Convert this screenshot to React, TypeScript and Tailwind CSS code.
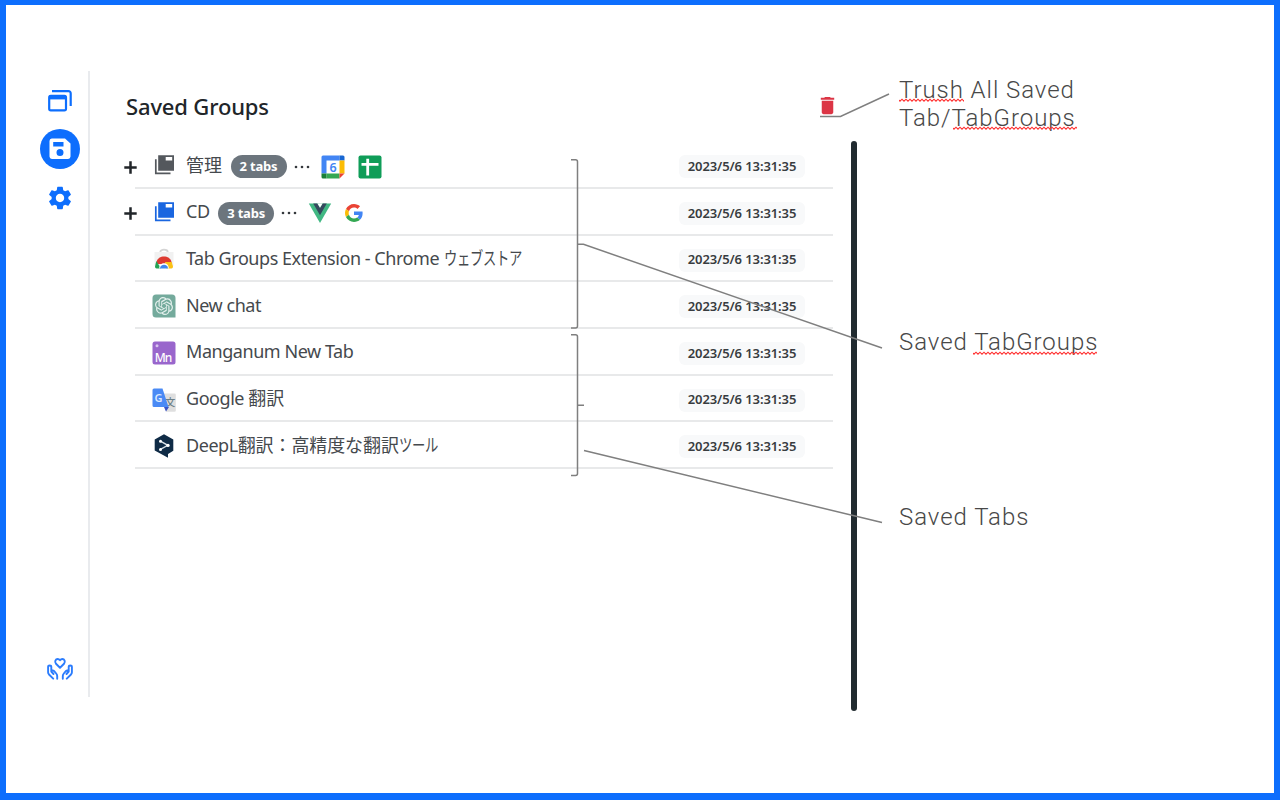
import type { ReactNode } from "react";
import { MdSettings, MdDelete } from "react-icons/md";

const DATE = "2023/5/6 13:31:35";

function WindowsIcon() {
  return (
    <svg width="24" height="22" viewBox="0 0 24 22" fill="none" stroke="#0d6efd" strokeWidth="2.2">
      <path d="M4 1.2H20.500a2.200 2.200 0 0 1 2.200 2.200V16" />
      <rect x="1.2" y="5.800" width="16.800" height="14.500" rx="1.600" />
      <path d="M1.200 7.400h16.800" strokeWidth="4" />
    </svg>
  );
}

function SaveIcon() {
  return (
    <svg width="22" height="22" viewBox="0 0 22 22">
      <path
        fill="#fff"
        fillRule="evenodd"
        d="M2.8.5H16L21.5 5.500V18.600a2.400 2.400 0 0 1-2.400 2.400H2.900a2.400 2.400 0 0 1-2.400-2.400V2.900A2.400 2.400 0 0 1 2.800.5ZM4.200 4v4.500h10.300V4ZM11 10.900a3.500 3.500 0 1 0 0 7 3.500 3.500 0 0 0 0-7Z"
      />
    </svg>
  );
}

function CareIcon() {
  return (
    <svg width="26" height="22" viewBox="0 0 26 22" fill="none" stroke="#2b7cfd" strokeWidth="1.9" strokeLinejoin="round" strokeLinecap="round">
      <path d="M13 9.700 9 5.800C7.200 3.600 8.600 1 10.700 1c1 0 1.700.5 2.300 1.200C13.600 1.500 14.300 1 15.300 1c2.100 0 3.500 2.600 1.700 4.800Z" />
      <path d="M6.200 20.700 2 16.500c-.6-.7-.9-1.300-.9-2.200V9c0-2 3.200-2 3.200 0v4.500l2.200 2.500M4.300 13.200c.7-1 2-1 2.900 0l2 2.300c.7.8 1 1.500 1 2.500v2.700" />
      <path d="M19.800 20.700 24 16.500c.6-.7.900-1.300.9-2.200V9c0-2-3.200-2-3.200 0v4.500L19.500 16M21.700 13.200c-.7-1-2-1-2.900 0l-2 2.300c-.7.8-1 1.500-1 2.500v2.700" />
    </svg>
  );
}

function GroupIcon({ color }: { color: string }) {
  return (
    <svg width="24" height="24" viewBox="0 0 24 24">
      <path d="M3.800 5.200v14.200H18.500" fill="none" stroke={color} strokeWidth="1.700" />
      <path fill={color} fillRule="evenodd" d="M6.200 1.200h15.800v15.500H6.200ZM13.700 3v3.500h6.500V3Z" />
    </svg>
  );
}

function CalendarIcon() {
  return (
    <svg width="24" height="24" viewBox="0 0 24 24">
      <path fill="#fff" d="M4 4h15v15H4z" />
      <path fill="#4285f4" d="M2 .5h16.500v5H5.500v13h-5V2A1.500 1.500 0 0 1 2 .5Z" />
      <path fill="#1967d2" d="M18.500.5H22A1.500 1.500 0 0 1 23.500 2v3.500h-5Z" />
      <path fill="#fbbc04" d="M18.500 5.500h5v13h-5z" />
      <path fill="#34a853" d="M5.500 18.500h13v5h-13z" />
      <path fill="#188038" d="M.5 18.500h5v5H2A1.500 1.500 0 0 1 .5 22Z" />
      <path fill="#ea4335" d="M18.500 18.500h5l-5 5Z" />
      <text x="12" y="16.600" textAnchor="middle" fontFamily="Noto Sans, sans-serif" fontWeight="600" fontSize="12.500" fill="#4285f4">6</text>
    </svg>
  );
}

function SheetsIcon() {
  return (
    <svg width="24" height="24" viewBox="0 0 24 24">
      <rect x=".5" y=".5" width="23" height="23" rx="2" fill="#0f9d58" />
      <path d="M3.500 9.300h17M9.700 3.800v16.700" stroke="#fff" strokeWidth="2.800" />
    </svg>
  );
}

function VueIcon() {
  return (
    <svg width="24" height="24" viewBox="0 0 24 24">
      <path fill="#41b883" d="M.8 2.500h22.400L12 22Z" />
      <path fill="#35495e" d="M5.200 2.500h4.200L12 7l2.600-4.500h4.200L12 14.300Z" />
      <path fill="#fff" d="M9.400 2.500h5.200L12 6.700Z" />
    </svg>
  );
}

function GoogleIcon() {
  return (
    <svg width="18" height="18" viewBox="0 0 48 48">
      <path fill="#EA4335" d="M24 9.500c3.540 0 6.710 1.220 9.210 3.600l6.850-6.850C35.900 2.380 30.470 0 24 0 14.620 0 6.510 5.380 2.560 13.220l7.980 6.190C12.430 13.720 17.740 9.500 24 9.500z" />
      <path fill="#4285F4" d="M46.980 24.550c0-1.570-.15-3.090-.38-4.550H24v9.020h12.940c-.58 2.960-2.260 5.480-4.780 7.180l7.730 6c4.510-4.180 7.090-10.360 7.090-17.650z" />
      <path fill="#FBBC05" d="M10.530 28.590c-.48-1.450-.76-2.990-.76-4.590s.27-3.140.76-4.590l-7.980-6.190C.92 16.460 0 20.120 0 24c0 3.880.92 7.540 2.560 10.780l7.970-6.190z" />
      <path fill="#34A853" d="M24 48c6.480 0 11.930-2.130 15.890-5.810l-7.730-6c-2.150 1.450-4.920 2.300-8.160 2.300-6.260 0-11.570-4.220-13.470-9.910l-7.980 6.190C6.510 42.620 14.620 48 24 48z" />
    </svg>
  );
}

function StoreIcon() {
  return (
    <svg width="24" height="24" viewBox="0 0 24 24">
      <path d="M8.300 5V4c0-3.200 7.400-3.200 7.400 0v1" fill="none" stroke="#d4d4d4" strokeWidth="1.800" />
      <path fill="#f1f1f1" d="M2.500 4h19v14h-19Z" />
      <path fill="#dd3a31" d="M4.500 14c1.500-7.300 13.500-7.300 15 0v2h-15Z" />
      <path fill="#22a454" d="M4.300 13 9 20.500H4.500q-1.500 0-1.500-2Z" />
      <path fill="#fbc116" d="M13 14h6.700L21 18.500q0 2-1.500 2H14Z" />
      <path fill="#fff" d="M7.200 20.500c0-7 9.600-7 9.600 0Z" />
      <path fill="#4087ed" d="M8 20.500c0-5 8-5 8 0Z" />
    </svg>
  );
}

function ChatIcon() {
  return (
    <svg width="24" height="24" viewBox="0 0 24 24">
      <path fill="#74aa9c" d="M4 .5h16A3.500 3.500 0 0 1 23.500 4v19.500H4A3.500 3.500 0 0 1 .5 20V4A3.500 3.500 0 0 1 4 .5Z" />
      <path
        transform="translate(3 3) scale(.75)"
        fill="#e4f0ed"
        d="M22.282 9.821a5.985 5.985 0 0 0-.516-4.910 6.046 6.046 0 0 0-6.510-2.900A6.065 6.065 0 0 0 4.981 4.182a5.985 5.985 0 0 0-3.998 2.900 6.046 6.046 0 0 0 .743 7.097 5.980 5.980 0 0 0 .510 4.911 6.051 6.051 0 0 0 6.515 2.900A5.985 5.985 0 0 0 13.260 24a6.056 6.056 0 0 0 5.772-4.206 5.990 5.990 0 0 0 3.998-2.900 6.056 6.056 0 0 0-.748-7.073zM13.260 22.430a4.476 4.476 0 0 1-2.876-1.040l.142-.081 4.778-2.758a.795.795 0 0 0 .393-.681v-6.737l2.020 1.169a.071.071 0 0 1 .038.052v5.583a4.504 4.504 0 0 1-4.495 4.493zM3.600 18.304a4.471 4.471 0 0 1-.535-3.014l.142.085 4.783 2.759a.771.771 0 0 0 .781 0l5.843-3.369v2.332a.080.080 0 0 1-.033.062L9.740 19.950a4.499 4.499 0 0 1-6.140-1.646zM2.341 7.896a4.485 4.485 0 0 1 2.365-1.973v5.678a.766.766 0 0 0 .388.677l5.814 3.354-2.020 1.169a.076.076 0 0 1-.071 0l-4.830-2.787A4.504 4.504 0 0 1 2.341 7.896zm16.596 3.855-5.833-3.387 2.015-1.164a.076.076 0 0 1 .071 0l4.830 2.791a4.494 4.494 0 0 1-.676 8.105v-5.678a.790.790 0 0 0-.407-.667zm2.011-3.023-.142-.085-4.774-2.782a.776.776 0 0 0-.785 0L9.409 9.230V6.897a.066.066 0 0 1 .028-.061l4.830-2.787a4.499 4.499 0 0 1 6.681 4.660zM8.306 12.863l-2.020-1.164a.080.080 0 0 1-.038-.057V6.075a4.499 4.499 0 0 1 7.376-3.454l-.142.081-4.778 2.758a.795.795 0 0 0-.393.681zm1.098-2.366 2.602-1.500 2.607 1.500v2.999l-2.598 1.500-2.607-1.500z"
      />
    </svg>
  );
}

function ManganumIcon() {
  return (
    <svg width="24" height="24" viewBox="0 0 24 24">
      <rect x=".5" y=".5" width="23" height="23" rx="2.500" fill="#9966cc" />
      <circle cx="5" cy="4.800" r="1.500" fill="#d9c5ee" />
      <text x="2.800" y="20.700" textLength="17.500" fontFamily="Noto Sans, sans-serif" fontWeight="500" fontSize="12" fill="#fff">Mn</text>
    </svg>
  );
}

function TranslateIcon() {
  return (
    <svg width="24" height="24" viewBox="0 0 24 24">
      <path fill="#dfdfdf" d="M9 5.500h13.500a1.300 1.300 0 0 1 1.300 1.300v15.700a1.300 1.300 0 0 1-1.300 1.300H14Z" />
      <text x="13.200" y="18" fontFamily="Noto Sans CJK JP, sans-serif" fontSize="10" fontWeight="500" fill="#6c7f87">文</text>
      <path fill="#3a53c5" d="m12 19 5 0-3 4.500Z" />
      <path fill="#4a8af5" d="M2 .5h8.500l6 18.500H2A1.500 1.500 0 0 1 .5 17.500V2A1.500 1.500 0 0 1 2 .5Z" />
      <text x="2.500" y="14" fontFamily="Noto Sans, sans-serif" fontWeight="600" fontSize="11" fill="#dce9ff">G</text>
    </svg>
  );
}

function DeepLIcon() {
  return (
    <svg width="24" height="24" viewBox="0 0 24 24">
      <path fill="#0f2b46" d="m12 .3 9.300 5.200v11.300L16 20v3.700L11 21l-8.300-4.500v-11Z" />
      <path d="m8 6.800 7.800 4.500L8 15.700" fill="none" stroke="#d8e1e8" strokeWidth="1.400" />
      <g fill="#fff">
        <circle cx="8.500" cy="7.200" r="1.500" />
        <circle cx="16" cy="11.400" r="1.700" />
        <circle cx="8.500" cy="15.500" r="1.500" />
      </g>
    </svg>
  );
}

function Row({
  icon,
  children,
  count,
  favicons,
}: {
  icon: ReactNode;
  children: ReactNode;
  count?: string;
  favicons?: ReactNode;
}) {
  return (
    <div className="flex h-[46.67px] items-stretch">
      <div className="flex w-[11px] shrink-0 items-center pt-[3px]">
        {count && (
          <svg className="shrink-0" width="13" height="13" viewBox="0 0 13 13">
            <path d="M.3 6.500h12.400M6.500.3v12.400" stroke="#212529" strokeWidth="2.500" />
          </svg>
        )}
      </div>
      <div className="flex w-[698px] shrink-0 items-center border-b-2 border-[#e8e9ea] pl-[17px]">
        <div className="mt-[3px] w-[24px] shrink-0">{icon}</div>
        <div className="mt-[1px] ml-[10px] text-[18px] tracking-[-0.45px] whitespace-nowrap text-[#45494d]">{children}</div>
        {count && (
          <>
            <div className="mt-[4px] ml-[8.5px] flex h-[23px] w-[56px] shrink-0 items-center justify-center rounded-full bg-[#6c757d] text-[13px] font-bold tracking-[-0.2px] whitespace-nowrap text-white">
              {count}
            </div>
            <svg className="mt-[4px] ml-[7px] shrink-0" width="16" height="4" viewBox="0 0 16 4" fill="#34383c">
              <circle cx="2" cy="2" r="1.300" />
              <circle cx="8" cy="2" r="1.300" />
              <circle cx="14" cy="2" r="1.300" />
            </svg>
            <div className="mt-[4px] ml-[11px] flex items-center gap-[13px]">{favicons}</div>
          </>
        )}
        <div className="mt-[4px] mr-[28px] ml-auto flex h-[23px] w-[126px] shrink-0 items-center justify-center rounded-[6px] bg-[#f8f9fa] text-[13px] font-semibold tracking-[-0.1px] whitespace-nowrap text-[#383c40]">
          {DATE}
        </div>
      </div>
    </div>
  );
}

export default function App() {
  return (
    <div className="relative flex h-[800px] w-[1280px] overflow-hidden border-t-[5px] border-r-[6px] border-b-[7px] border-l-[6px] border-[#0d6efd] bg-white font-['Noto_Sans','Noto_Sans_CJK_JP',sans-serif]">
      <nav className="mt-[66px] flex h-[626px] w-[84px] shrink-0 flex-col items-center border-r-2 border-[#e9ebee] pl-[25px]">
        <div className="flex w-full flex-col items-center pt-[19px]">
          <WindowsIcon />
          <div className="mt-[17px] flex h-[40px] w-[40px] items-center justify-center rounded-full bg-[#0d6efd]">
            <SaveIcon />
          </div>
          <MdSettings className="mt-[15px] text-[28px] text-[#0d6efd]" />
        </div>
        <div className="mt-auto mb-[17px]">
          <CareIcon />
        </div>
      </nav>

      <main className="w-[750px] shrink-0 pt-[83px] pl-[34px]">
        <header className="flex h-[37px] items-center justify-between pr-[1px]">
          <h1 className="ml-[2px] text-[22px] font-medium tracking-[-0.15px] whitespace-nowrap text-[#212529]">
            Saved Groups
          </h1>
          <MdDelete className="mb-[2px] w-[23px] shrink-0 text-[23px] text-[#dc3545]" />
        </header>
        <section className="mt-[17.4px]">
          <Row icon={<GroupIcon color="#54585d" />} count="2 tabs" favicons={<><CalendarIcon /><SheetsIcon /></>}>
            <span className="tracking-normal">管理</span>
          </Row>
          <Row icon={<GroupIcon color="#1a66e0" />} count="3 tabs" favicons={<><VueIcon /><GoogleIcon /></>}>
            CD
          </Row>
          <Row icon={<StoreIcon />}>
            Tab Groups Extension - Chrome{" "}
            <span className="ml-[1px] inline-block origin-left scale-x-[0.74]">ウェブストア</span>
          </Row>
          <Row icon={<ChatIcon />}>New chat</Row>
          <Row icon={<ManganumIcon />}>Manganum New Tab</Row>
          <Row icon={<TranslateIcon />}>
            Google <span className="tracking-normal">翻訳</span>
          </Row>
          <Row icon={<DeepLIcon />}>
            DeepL<span className="tracking-[-0.1px]">翻訳：高精度な翻訳</span>
            <span className="inline-block origin-left scale-x-[0.74]">ツール</span>
          </Row>
        </section>
      </main>

      <div className="mt-[136px] ml-[11px] h-[570px] w-[6px] shrink-0 rounded-full bg-[#212b30]" />

      <aside className="ml-[42px] pt-[71px] font-['Roboto',sans-serif] text-[24px] leading-[28px] font-light tracking-[0.95px] whitespace-nowrap text-[#484848]">
        <p>
          Trush All Saved
          <br />
          Tab/TabGroups
        </p>
        <p className="mt-[196px]">Saved TabGroups</p>
        <p className="mt-[147px]">Saved Tabs</p>
      </aside>

      <svg
        className="pointer-events-none absolute -top-[5px] -left-[6px]"
        width="1280"
        height="800"
        viewBox="0 0 1280 800"
        fill="none"
        stroke="#7f7f7f"
        strokeWidth="1.500"
      >
        <defs>
          <pattern id="squiggle" x="0" y="0" width="4" height="4" patternUnits="userSpaceOnUse">
            <path d="M-1 1.200 1 3.200 3 1.200 5 3.200" stroke="#ff3030" strokeWidth="1.100" />
          </pattern>
        </defs>
        <g stroke="none" fill="url(#squiggle)">
          <rect width="65" height="4" transform="translate(899 98)" />
          <rect width="124" height="4" transform="translate(953 126)" />
          <rect width="124" height="4" transform="translate(973 351)" />
        </g>
        <path d="M820 116.500h20.500L889 94" />
        <path d="M571 159.800h4.500q2 0 2 2V326q0 2-2 2H571M577.500 244.300h6L882 348" />
        <path d="M571 334.800h4.500q2 0 2 2V473.500q0 2-2 2H571M577.500 405.300h6.500M584 450.500 882 522.500" />
      </svg>
    </div>
  );
}
